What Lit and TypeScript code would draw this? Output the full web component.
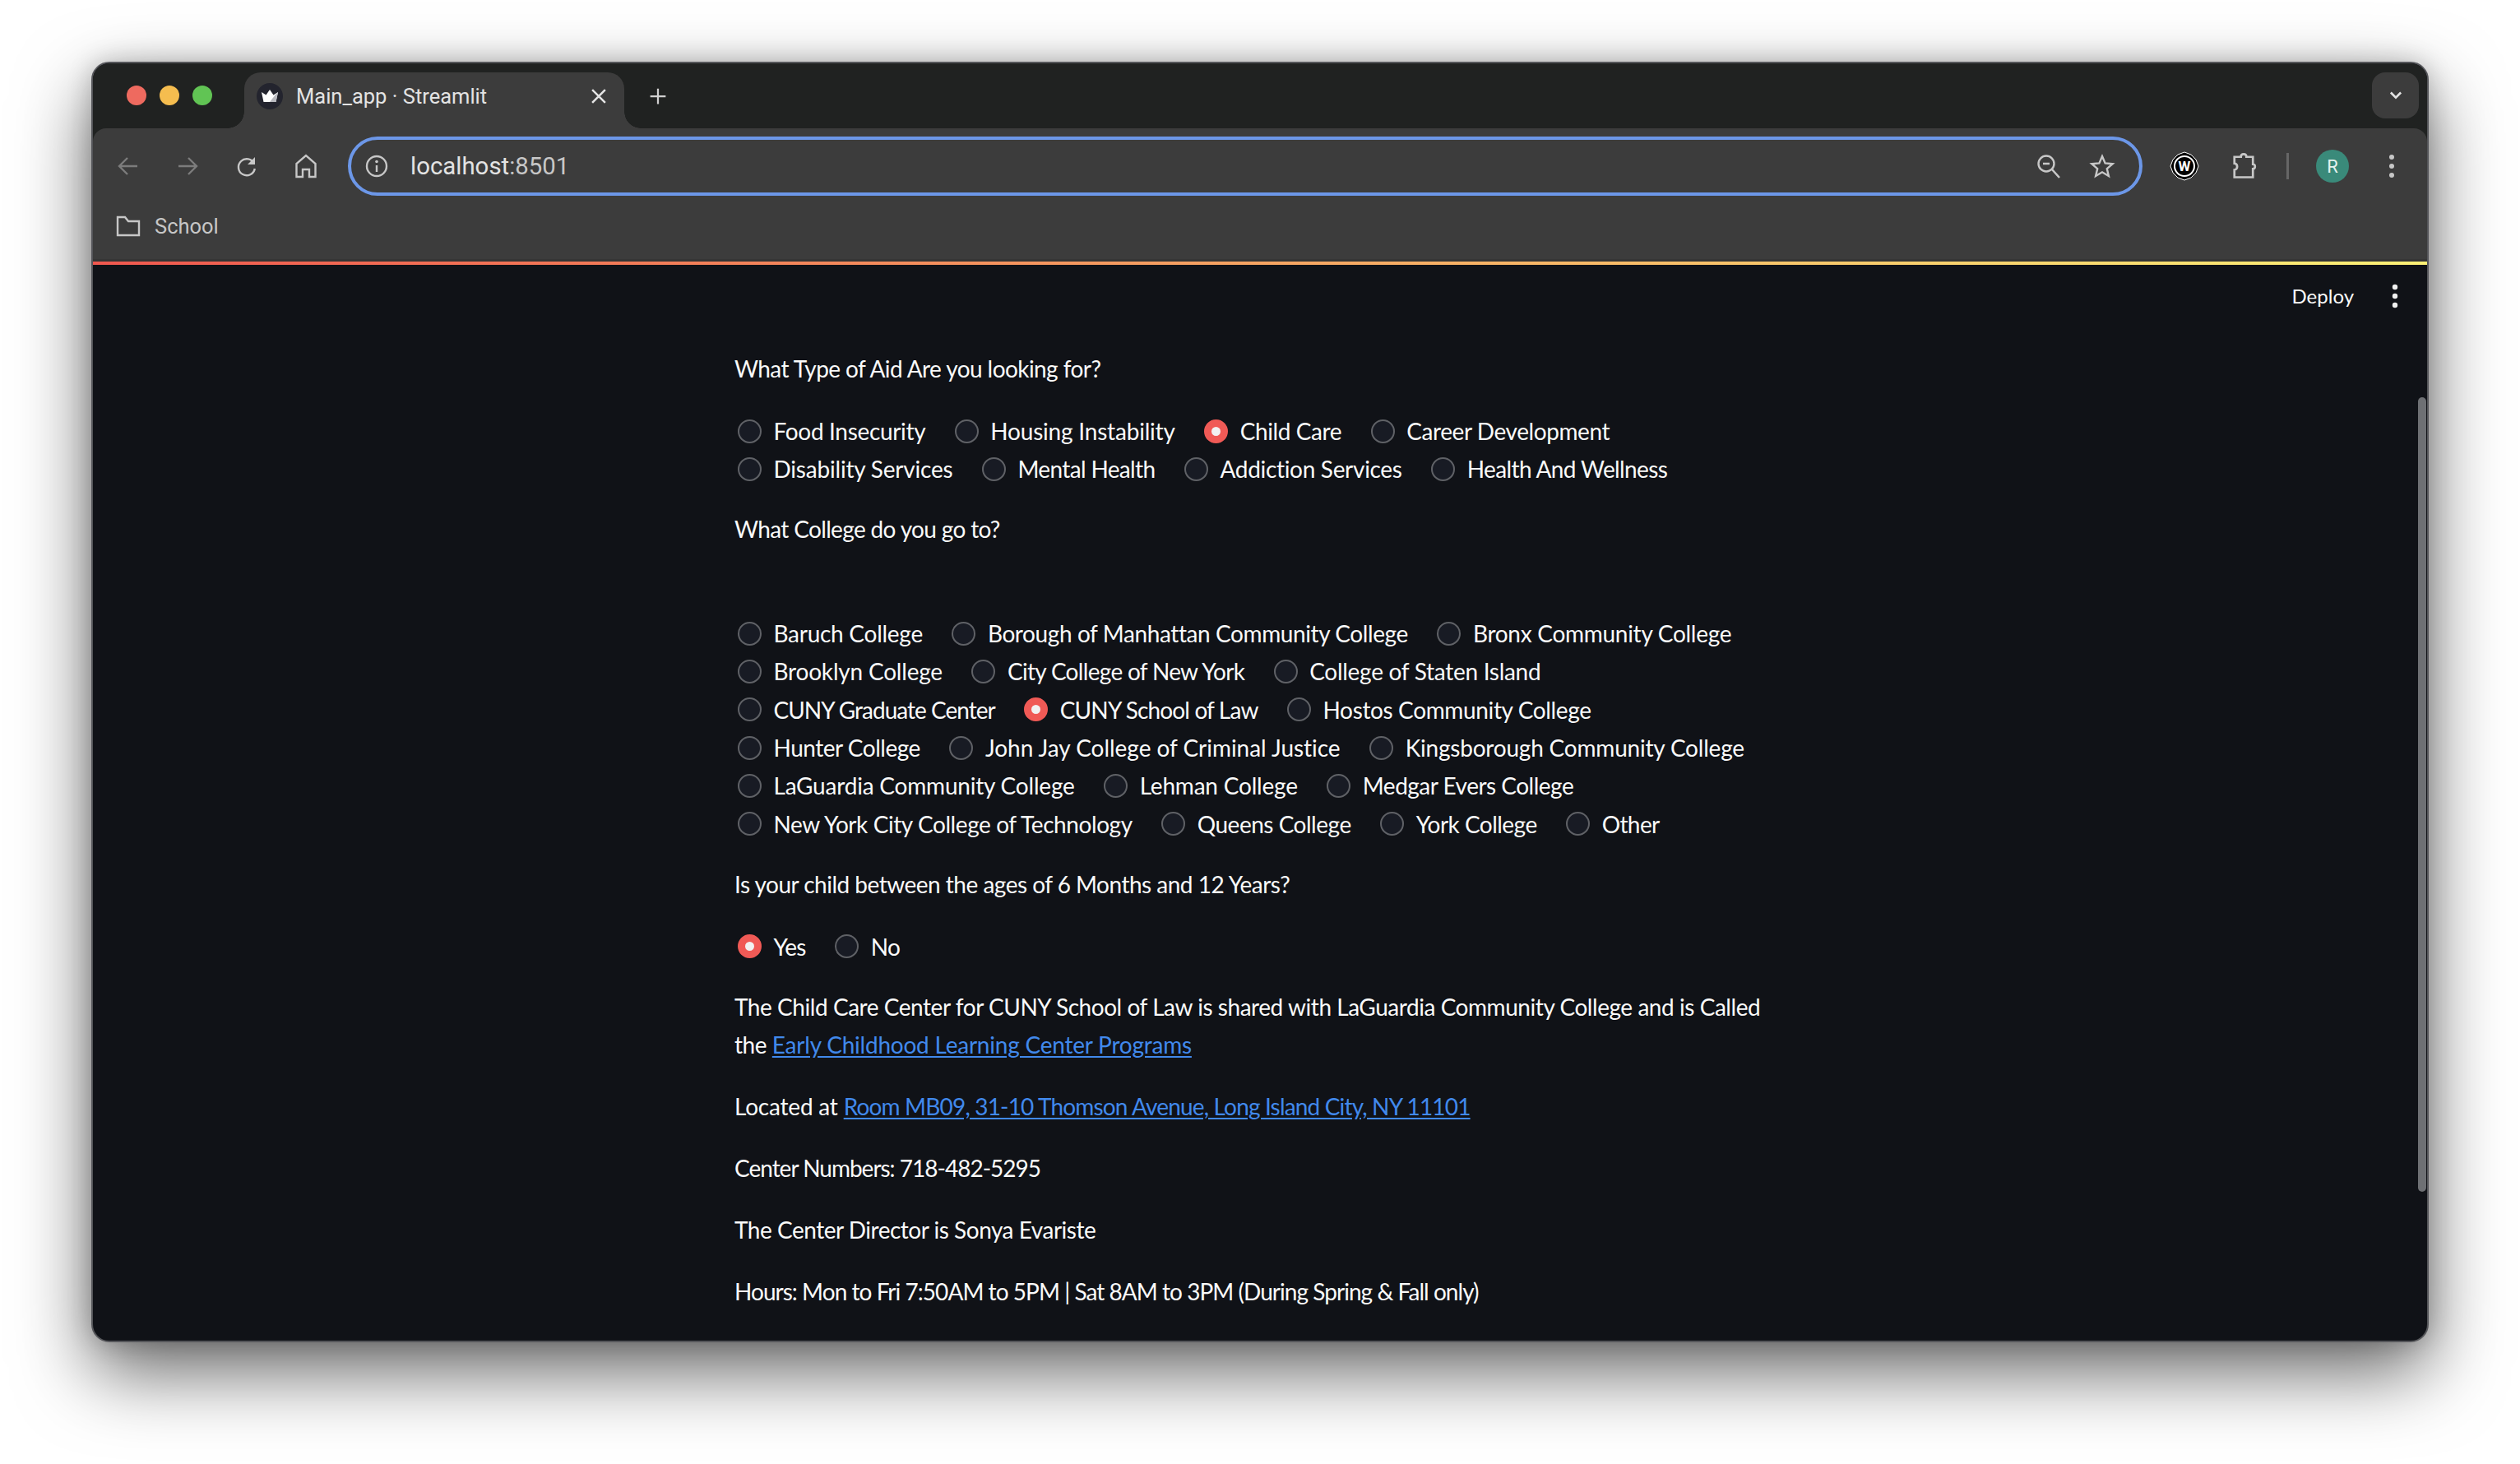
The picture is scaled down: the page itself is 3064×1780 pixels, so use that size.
import { LitElement, html, css, svg } from 'lit';
import { customElement } from 'lit/decorators.js';

// name, letter spacing (the fallback font runs a bit wider than the original), checked
type Option = [string, number, boolean?];

const aidRows: Option[][] = [
  [['Food Insecurity', -0.33], ['Housing Instability', -0.2], ['Child Care', -0.4, true], ['Career Development', -0.42]],
  [['Disability Services', -0.2], ['Mental Health', -0.65], ['Addiction Services', -0.31], ['Health And Wellness', -0.61]],
];

const collegeRows: Option[][] = [
  [['Baruch College', -0.27], ['Borough of Manhattan Community College', -0.4], ['Bronx Community College', -0.28]],
  [['Brooklyn College', -0.2], ['City College of New York', -0.69], ['College of Staten Island', -0.28]],
  [['CUNY Graduate Center', -0.98], ['CUNY School of Law', -0.85, true], ['Hostos Community College', -0.36]],
  [['Hunter College', -0.48], ['John Jay College of Criminal Justice', -0.03], ['Kingsborough Community College', -0.2]],
  [['LaGuardia Community College', -0.2], ['Lehman College', -0.2], ['Medgar Evers College', -0.5]],
  [['New York City College of Technology', -0.42], ['Queens College', -0.48], ['York College', -0.53], ['Other', -0.6]],
];

const childRows: Option[][] = [[['Yes', -0.7, true], ['No', -0.6]]];

const icon = (body: unknown, size = 32) => html`<svg class="icon" width=${size} height=${size} viewBox="0 0 32 32" fill="none" stroke="currentColor" stroke-width="2.4">${body}</svg>`;

const ls = (v: number) => `letter-spacing:${v}px`;

@customElement('app-root')
export class AppRoot extends LitElement {
  static styles = css`
    :host {
      display: block;
      width: 3064px;
      height: 1780px;
      background: #fff;
      overflow: hidden;
      padding: 75px 111px 148px;
      box-sizing: border-box;
    }

    .window {
      height: 100%;
      box-sizing: border-box;
      border: 2px solid #55565a;
      border-radius: 22px;
      overflow: hidden;
      display: flex;
      flex-direction: column;
      background: #101217;
      box-shadow: 0 36px 90px rgba(0, 0, 0, 0.6), 0 0 30px rgba(0, 0, 0, 0.2);
      font-family: Roboto, sans-serif;
    }

    .icon { display: block; flex: none; }

    .tabstrip {
      height: 79px;
      flex: none;
      display: flex;
      align-items: flex-end;
      background: #202221;
      position: relative;
    }

    .lights {
      width: 184px;
      height: 68px;
      box-sizing: border-box;
      padding: 0 0 12px 41px;
      display: flex;
      align-items: center;
      gap: 16px;
    }

    .lights i { width: 24px; height: 24px; border-radius: 50%; }
    .lights i:nth-child(1) { background: #ee6a5f; }
    .lights i:nth-child(2) { background: #f5bd4f; }
    .lights i:nth-child(3) { background: #61c454; }

    .tab {
      position: relative;
      width: 462px;
      height: 68px;
      box-sizing: border-box;
      padding: 0 13px 10px 15px;
      background: #3c3c3c;
      border-radius: 20px 20px 0 0;
      display: flex;
      align-items: center;
      color: #e3e3e3;
      font-size: 25.5px;
    }

    .tab::before, .tab::after {
      content: '';
      position: absolute;
      bottom: 0;
      width: 20px;
      height: 20px;
    }
    .tab::before { left: -20px; background: radial-gradient(circle at 0 0, #202221 19.5px, #3c3c3c 20px); }
    .tab::after { right: -20px; background: radial-gradient(circle at 100% 0, #202221 19.5px, #3c3c3c 20px); }

    .tab-title { flex: 1; margin-left: 16px; }

    .new-tab { margin: 0 0 24px 26px; color: #d0d0d0; }

    .tab-menu {
      margin: 0 10px 12px auto;
      width: 57px;
      height: 56px;
      border-radius: 16px;
      background: #3c3c3c;
      color: #e3e3e3;
      display: flex;
      align-items: center;
      justify-content: center;
    }

    .chrome {
      height: 162px;
      flex: none;
      background: #3c3c3c;
      border-bottom: 3px solid #353535;
      display: flex;
      flex-direction: column;
      border-radius: 16px 16px 0 0;
      box-sizing: border-box;
      padding-top: 10px;
      box-shadow: 0 -16px 0 #202221;
    }

    .toolbar {
      height: 72px;
      display: flex;
      align-items: center;
      color: #c7c7c7;
      padding-left: 25px;
    }

    .nav { width: 36px; margin-right: 36px; display: flex; justify-content: center; }
    .nav.off { color: #7c7c7c; }
    .nav.last { margin-right: 33px; }

    .omnibox {
      width: 2182px;
      height: 72px;
      box-sizing: border-box;
      border: 4px solid #6c97e8;
      border-radius: 36px;
      display: flex;
      align-items: center;
      padding: 0 29px 0 15px;
      gap: 25px;
      color: #c7c7c7;
    }

    .url { flex: 1; font-size: 29.4px; color: #e3e3e3; }
    .url span { color: #c7c7c7; }
    .omni-end { display: flex; gap: 33px; }

    .actions { display: flex; align-items: center; color: #c7c7c7; padding-left: 33px; gap: 36px; }
    .divider { width: 3px; height: 32px; background: #666; margin: 0 -3px 0 -2px; }

    .avatar {
      width: 40px;
      height: 40px;
      border-radius: 50%;
      background: #3a8a7a;
      color: #e6f2ef;
      font-size: 22px;
      display: flex;
      align-items: center;
      justify-content: center;
    }

    .bookmarks {
      display: flex;
      align-items: center;
      gap: 16px;
      padding-left: 27px;
      margin-top: 19px;
      height: 36px;
      color: #c7c7c7;
      font-size: 25.5px;
    }

    .rainbow {
      height: 4px;
      flex: none;
      background: linear-gradient(90deg, #f0584f, #fdf176);
    }

    main {
      flex: 1;
      min-height: 0;
      position: relative;
      overflow: hidden;
      color: #fafafa;
      font-family: Lato, 'Noto Sans', sans-serif;
      font-size: 28px;
      line-height: 46px;
    }

    .header {
      height: 76px;
      display: flex;
      align-items: center;
      justify-content: flex-end;
      padding-right: 29px;
      gap: 40px;
      font-size: 24px;
    }

    .content { margin-left: 780px; width: 1300px; padding-top: 27px; }

    .label { margin-bottom: 30px; }
    .label.tall { margin-bottom: 81px; }

    .group { margin-bottom: 27px; }
    .row { display: flex; gap: 35.5px; height: 46px; }
    .college .row { height: 46.3px; }

    .option { display: flex; align-items: center; gap: 14.5px; white-space: nowrap; }
    .option:first-child { padding-left: 4px; }

    .radio {
      width: 29px;
      height: 29px;
      flex: none;
      box-sizing: border-box;
      border-radius: 50%;
      border: 2px solid #5f6166;
      background: #181b24;
    }

    .radio.on {
      border: 9.500px solid #f05a56;
      background: #f2f2f2;
    }

    p { margin: 0 0 29px; }
    a { color: #4189ec; text-decoration: underline; text-underline-offset: 3px; }

    .scrollbar {
      position: absolute;
      top: 161px;
      right: 1px;
      width: 10px;
      height: 966px;
      border-radius: 5px;
      background: #6e7074;
    }
  `;

  private renderGroup(rows: Option[][], cls = '') {
    return html`<div class="group ${cls}">
      ${rows.map((row) => html`<div class="row">
        ${row.map(([name, spacing, on]) => html`<label class="option" style=${ls(spacing)}><span class="radio ${on ? 'on' : ''}"></span>${name}</label>`)}
      </div>`)}
    </div>`;
  }

  private renderTabs() {
    return html`<div class="tabstrip">
      <div class="lights"><i></i><i></i><i></i></div>
      <div class="tab">
        <svg class="icon" width="32" height="32" viewBox="0 0 32 32">
          <circle cx="16" cy="16" r="16" fill="#23242e"></circle>
          <path d="M6 11l5.5 3.5L16 8l4.500 6.500L26 11l-2.500 12h-15z" fill="#fff"></path>
          <path d="M16 23l7-9 3-3-2.500 12z" fill="#b9bac0"></path>
        </svg>
        <span class="tab-title">Main_app · Streamlit</span>
        ${icon(svg`<path d="M9 9l14 14M23 9l-14 14" stroke-width="2.2"></path>`, 36)}
      </div>
      <div class="new-tab">${icon(svg`<path d="M16 6v20M6 16h20"></path>`, 30)}</div>
      <div class="tab-menu">${icon(svg`<path d="M9 12l7 7 7-7" stroke-width="3"></path>`, 28)}</div>
    </div>`;
  }

  private renderToolbar() {
    return html`<div class="chrome">
      <div class="toolbar">
        <div class="nav off">${icon(svg`<path d="M27 16H6M15 6L5 16l10 10"></path>`)}</div>
        <div class="nav off">${icon(svg`<path d="M5 16h21M17 6l10 10-10 10"></path>`)}</div>
        <div class="nav">${icon(svg`<path d="M25 13a10 10 0 1 0 .8 6"></path><path d="M26 5v9h-9" stroke="none" fill="currentColor"></path>`)}</div>
        <div class="nav last">${icon(svg`<path d="M4.500 29V13L16 3l11.500 10v16H20v-9h-8v9z"></path>`)}</div>
        <div class="omnibox">
          ${icon(svg`<circle cx="16" cy="16" r="12"></circle><path d="M16 15v8"></path><circle cx="16" cy="10.500" r="1.800" fill="currentColor" stroke="none"></circle>`)}
          <div class="url">localhost<span>:8501</span></div>
          <div class="omni-end">
            ${icon(svg`<circle cx="13" cy="13" r="9.500"></circle><path d="M20 20l9 10M9 13h8" stroke-width="2.600"></path>`)}
            ${icon(svg`<path d="M16 4l3.600 8.400 9.100.8-6.900 6 2.100 8.900L16 23.300l-7.900 4.800 2.100-8.900-6.900-6 9.100-.8z"></path>`)}
          </div>
        </div>
        <div class="actions">
          <svg class="icon" width="36" height="36" viewBox="0 0 36 36">
            <path d="M18 1l8 3 6 6 3 8-3 8-6 6-8 3-8-3-6-6-3-8 3-8 6-6z" fill="#000" stroke="#fff" stroke-width="1"></path>
            <circle cx="18" cy="18" r="12" fill="none" stroke="#fff" stroke-width="2"></circle>
            <text x="18" y="24" text-anchor="middle" font-family="Roboto" font-size="17" font-weight="700" fill="#fff">W</text>
          </svg>
          ${icon(svg`<path d="M6 6h7c0-4 6-4 6 0h7v8c3 0 3 5 0 5v9H6v-8c4 0 4-7 0-7z"></path>`, 36)}
          <div class="divider"></div>
          <div class="avatar">R</div>
          <svg class="icon" width="32" height="32" viewBox="0 0 32 32" fill="currentColor"><circle cx="16" cy="5" r="3"></circle><circle cx="16" cy="16" r="3"></circle><circle cx="16" cy="27" r="3"></circle></svg>
        </div>
      </div>
      <div class="bookmarks">
        ${icon(svg`<path d="M3 5h9l4 5h13v17H3z"></path>`)}
        <span>School</span>
      </div>
    </div>`;
  }

  render() {
    return html`<div class="window">
      ${this.renderTabs()}
      ${this.renderToolbar()}
      <div class="rainbow"></div>
      <main>
        <div class="header">
          <span>Deploy</span>
          <svg class="icon" width="20" height="32" viewBox="0 0 20 32" fill="#f0f0f0"><circle cx="10" cy="5" r="3.200"></circle><circle cx="10" cy="16" r="3.200"></circle><circle cx="10" cy="27" r="3.200"></circle></svg>
        </div>
        <div class="content">
          <div class="label" style=${ls(-0.57)}>What Type of Aid Are you looking for?</div>
          ${this.renderGroup(aidRows)}
          <div class="label tall" style=${ls(-0.65)}>What College do you go to?</div>
          ${this.renderGroup(collegeRows, 'college')}
          <div class="label" style=${ls(-0.51)}>Is your child between the ages of 6 Months and 12 Years?</div>
          ${this.renderGroup(childRows)}
          <p style=${ls(-0.45)}>The Child Care Center for CUNY School of Law is shared with LaGuardia Community College and is Called<br />the <a href="#" style=${ls(-0.22)}>Early Childhood Learning Center Programs</a></p>
          <p style=${ls(-0.2)}>Located at <a href="#" style=${ls(-0.83)}>Room MB09, 31-10 Thomson Avenue, Long Island City, NY 11101</a></p>
          <p style=${ls(-1)}>Center Numbers: 718-482-5295</p>
          <p style=${ls(-0.48)}>The Center Director is Sonya Evariste</p>
          <p style=${ls(-0.96)}>Hours: Mon to Fri 7:50AM to 5PM | Sat 8AM to 3PM (During Spring &amp; Fall only)</p>
        </div>
        <div class="scrollbar"></div>
      </main>
    </div>`;
  }
}
